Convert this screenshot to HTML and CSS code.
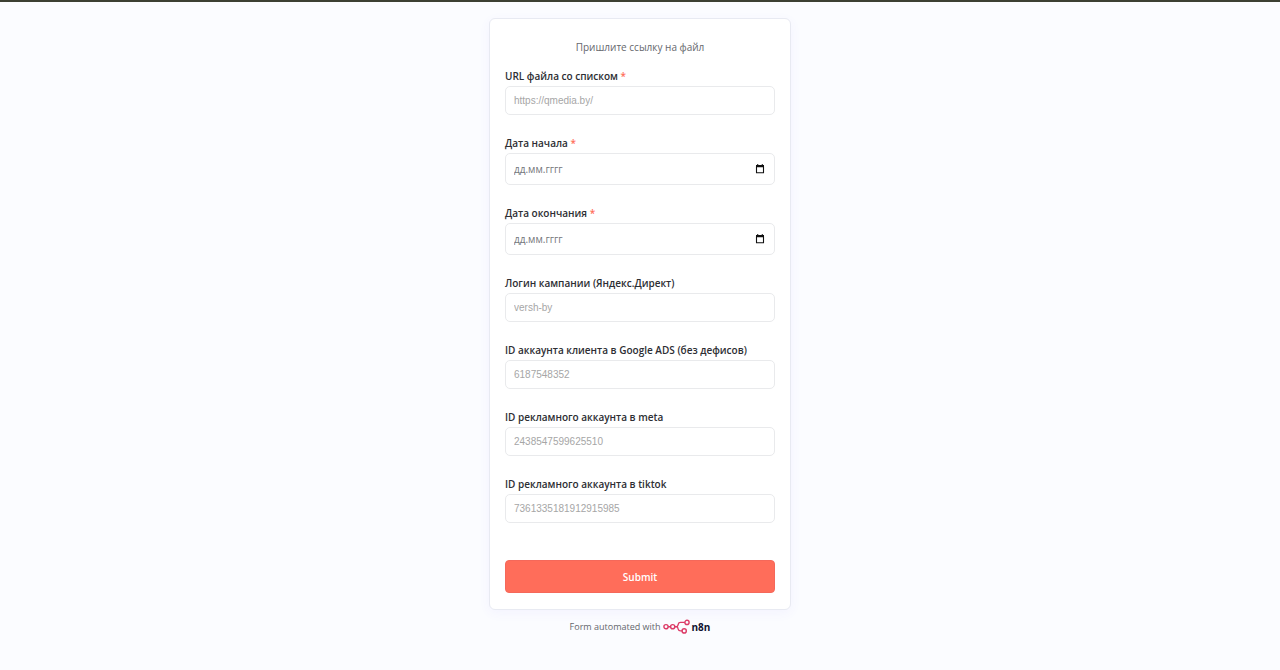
FILE: index.html
```html
<!DOCTYPE html>
<html lang="ru">
<head>
<meta charset="UTF-8" />
<meta name="viewport" content="width=device-width, initial-scale=1" />
<title>Пришлите ссылку на файл</title>
<link rel="stylesheet" href="styles.css">
</head>
<body>
<main class="container">
  <form class="card">
    <p class="form-header">Пришлите ссылку на файл</p>

    <div class="form-group">
      <label class="required" for="file-url">URL файла со списком</label>
      <input type="text" id="file-url" placeholder="https://qmedia.by/" required />
    </div>

    <div class="form-group">
      <label class="required" for="date-start">Дата начала</label>
      <div class="date-box">
        <input type="text" id="date-start" placeholder="дд.мм.гггг" required />
        <svg class="calendar" viewBox="0 0 10 10" aria-hidden="true"><path d="M1.5 2.5h7v6.3h-7z" fill="none" stroke="#111" stroke-width="1.1" stroke-linejoin="round"/><path d="M1 1h8v2.3H1zM2 .3h1.3V1H2zM6.7.3H8V1H6.7z" fill="#111"/></svg>
      </div>
    </div>

    <div class="form-group">
      <label class="required" for="date-end">Дата окончания</label>
      <div class="date-box">
        <input type="text" id="date-end" placeholder="дд.мм.гггг" required />
        <svg class="calendar" viewBox="0 0 10 10" aria-hidden="true"><path d="M1.5 2.5h7v6.3h-7z" fill="none" stroke="#111" stroke-width="1.1" stroke-linejoin="round"/><path d="M1 1h8v2.3H1zM2 .3h1.3V1H2zM6.7.3H8V1H6.7z" fill="#111"/></svg>
      </div>
    </div>

    <div class="form-group">
      <label for="login">Логин кампании (Яндекс.Директ)</label>
      <input type="text" id="login" placeholder="versh-by" />
    </div>

    <div class="form-group">
      <label for="google-id">ID аккаунта клиента в Google ADS (без дефисов)</label>
      <input type="text" id="google-id" placeholder="6187548352" />
    </div>

    <div class="form-group">
      <label for="meta-id">ID рекламного аккаунта в meta</label>
      <input type="text" id="meta-id" placeholder="2438547599625510" />
    </div>

    <div class="form-group">
      <label for="tiktok-id">ID рекламного аккаунта в tiktok</label>
      <input type="text" id="tiktok-id" placeholder="7361335181912915985" />
    </div>

    <button type="submit">Submit</button>
  </form>

  <a class="n8n-link" href="#">
    <span>Form automated with</span>
    <svg class="n8n-logo" viewBox="0 0 27 15" aria-hidden="true">
      <g fill="none" stroke="#dc3b67" stroke-width="1.4">
        <circle cx="3" cy="7.7" r="2.1"/>
        <circle cx="9.7" cy="7.7" r="2.1"/>
        <circle cx="24" cy="3.4" r="2.1"/>
        <circle cx="21.2" cy="11.9" r="2.1"/>
        <path d="M5.1 7.7h2.5M11.8 7.7h1.5c1 0 1.5-.6 1.7-1.6l.2-.8c.3-1.3 1-1.9 2.3-1.9h4.4M13.3 7.7c1 0 1.5.7 1.7 1.7l.2.7c.3 1.2 1 1.8 2.3 1.8h1.6"/>
      </g>
    </svg>
    <strong>n8n</strong>
  </a>
</main>
</body>
</html>
```
FILE: styles.css
```css
* {
  box-sizing: border-box;
}

body {
  margin: 0;
  min-height: 100vh;
  font-family: "Open Sans", sans-serif;
  font-size: 10px;
  line-height: 14px;
  color: #2d2e33;
  background: #fbfcff;
  border-top: 2px solid #3c4032;
}

.container {
  max-width: 302px;
  margin: 0 auto;
  padding: 16px 0;
}

.card {
  padding: 21px 15px 16px;
  background: #fff;
  border: 1px solid #e8eaf2;
  border-radius: 6px;
  box-shadow: 0 3px 12px rgba(99, 77, 255, 0.05);
}

.form-header {
  margin: 0 0 15px;
  text-align: center;
  color: #65676d;
}

.form-group {
  margin-bottom: 21px;
}

label {
  display: block;
  margin-bottom: 3px;
  font-weight: 600;
}

.required::after {
  content: " *";
  color: #ff6d5a;
}

input {
  display: block;
  width: 100%;
  height: 29px;
  padding: 0 8px;
  font-family: "Liberation Sans", Arial, sans-serif;
  font-size: 10px;
  background: #fff;
  border: 1px solid #e9eaec;
  border-radius: 5px;
}

input::placeholder {
  color: #a6a6a6;
}

.date-box {
  display: grid;
  align-items: center;
}

.date-box input,
.calendar {
  grid-area: 1 / 1;
}

.date-box input {
  height: 32px;
  font-family: "Open Sans", sans-serif;
}

.date-box input::placeholder {
  color: #73757a;
}

.calendar {
  justify-self: end;
  width: 10px;
  height: 10px;
  margin-right: 10px;
}

button {
  display: block;
  width: 100%;
  height: 33px;
  margin-top: 37px;
  font-family: inherit;
  font-size: 10px;
  font-weight: 600;
  color: #fff;
  background: #ff6d5a;
  border: 1px solid #f5685a;
  border-radius: 4px;
  cursor: pointer;
}

button:hover {
  background: #e85f4d;
}

.n8n-link {
  display: flex;
  justify-content: center;
  align-items: center;
  gap: 2px;
  margin-top: 9px;
  font-size: 9px;
  color: #65676d;
  text-decoration: none;
}

.n8n-logo {
  width: 27px;
  height: 15px;
}

.n8n-link strong {
  font-size: 10px;
  color: #101330;
}
```
